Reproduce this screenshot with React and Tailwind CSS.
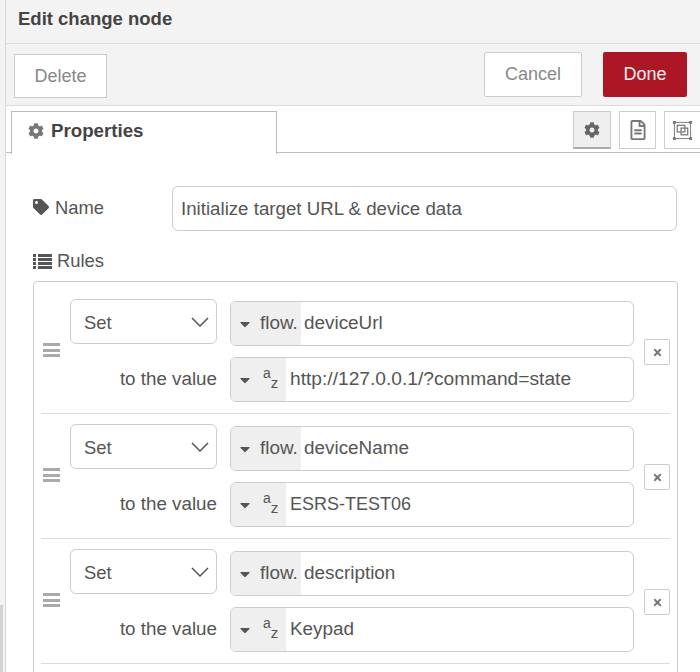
import React from 'react';
import { FaCog, FaTag, FaTimes, FaRegFileAlt, FaCaretDown } from 'react-icons/fa';

const LayoutIcon = () => (
  <svg viewBox="0 0 22 22" className="w-[21px] h-[21px] text-[#777]" fill="none" stroke="currentColor">
    <rect x="2.5" y="2.5" width="17" height="17" strokeWidth="1" />
    <rect x="1" y="1" width="3" height="3" fill="currentColor" stroke="none" />
    <rect x="18" y="1" width="3" height="3" fill="currentColor" stroke="none" />
    <rect x="1" y="18" width="3" height="3" fill="currentColor" stroke="none" />
    <rect x="18" y="18" width="3" height="3" fill="currentColor" stroke="none" />
    <rect x="5.5" y="5.5" width="8" height="7" strokeWidth="1.3" />
    <rect x="9.5" y="8.5" width="7" height="7" strokeWidth="1.3" />
  </svg>
);

const ListIcon = () => (
  <svg viewBox="0 0 19 15" className="w-[19px] h-[15px] text-[#555] mr-[5px]" fill="currentColor">
    <rect x="0" y="0" width="3" height="3" />
    <rect x="5" y="0" width="14" height="3" />
    <rect x="0" y="4" width="3" height="3" />
    <rect x="5" y="4" width="14" height="3" />
    <rect x="0" y="8" width="3" height="3" />
    <rect x="5" y="8" width="14" height="3" />
    <rect x="0" y="12" width="3" height="3" />
    <rect x="5" y="12" width="14" height="3" />
  </svg>
);

const Chevron = () => (
  <svg viewBox="0 0 18 10" className="w-[18px] h-[10px] text-[#555]" fill="none" stroke="currentColor" strokeWidth="1.5">
    <polyline points="1,1 9,9 17,1" />
  </svg>
);

const TypedPrefix = ({ type }) => (
  <div className={`${type === 'flow' ? 'w-[70px]' : 'w-[55px]'} h-full bg-[#efefef] flex items-center pl-[6px] shrink-0 text-[#555]`}>
    <FaCaretDown className="w-[16px] h-[16px] shrink-0 text-[#555]" />
    {type === 'flow' ? (
      <span className="ml-[7px] text-[18.9px]">flow.</span>
    ) : (
      <span className="ml-[10px] flex items-start text-[14px] leading-none">
        <span className="-mt-[3px]">a</span>
        <span className="mt-[6px] text-[15px]">z</span>
      </span>
    )}
  </div>
);

const TypedInput = ({ type, value, textSize, className }) => (
  <div className={`h-[45px] w-[404px] border border-[#ccc] rounded-[6px] overflow-hidden flex items-center bg-white ${className}`}>
    <TypedPrefix type={type} />
    <span className={`${type === 'flow' ? 'pl-[3px]' : 'pl-[4px]'} ${textSize} text-[#555]`}>{value}</span>
  </div>
);

const RuleRow = ({ field, value, valueSize }) => (
  <div className="h-[125px] border-b border-[#ddd] flex items-start shrink-0">
    <div className="w-[29px] shrink-0 flex flex-col gap-[2.5px] items-start pl-[2px] mt-[54px]">
      <div className="w-[17px] h-[3px] bg-[#aaa]" />
      <div className="w-[17px] h-[3px] bg-[#aaa]" />
      <div className="w-[17px] h-[3px] bg-[#aaa]" />
    </div>
    <div className="flex flex-col pt-[10px]">
      <div className="flex items-start">
        <div className="w-[147px] h-[45px] border border-[#ccc] rounded-[6px] bg-white flex items-center justify-between pl-[13px] pr-[7px] text-[18.4px] text-[#555]">
          <span className="pt-[3px]">Set</span>
          <Chevron />
        </div>
        <TypedInput type="flow" value={field} textSize="text-[18.9px]" className="ml-[13px] mt-[2px]" />
      </div>
      <div className="flex items-center mt-[11px]">
        <div className="w-[147px] text-right text-[18.8px] text-[#555]">to the value</div>
        <TypedInput type="str" value={value} textSize={valueSize} className="ml-[13px]" />
      </div>
    </div>
    <div className="ml-[10px] mt-[50px] w-[27px] h-[26px] border border-[#ccc] rounded-[2px] bg-white flex items-center justify-center">
      <FaTimes className="w-[11px] h-[11px] text-[#777]" />
    </div>
  </div>
);

export default function App() {
  return (
    <div className="w-[700px] h-[672px] overflow-hidden flex bg-white font-['Liberation_Sans',sans-serif]">
      {/* strip of the page behind the tray */}
      <div className="w-[6px] shrink-0 border-r border-[#d8d8d8] bg-[#f3f3f3] flex flex-col justify-end">
        <div className="w-[3px] h-[67px] bg-[#d4d4d4]" />
      </div>

      <div className="flex-1 min-w-0 flex flex-col">
        <div className="h-[44px] shrink-0 bg-[#f3f3f3] border-b border-[#ddd] flex items-center pl-[12px] pb-[5px] text-[18.5px] font-bold text-[#444]">
          Edit change node
        </div>

        <div className="h-[62px] shrink-0 bg-[#f3f3f3] border-b border-[#ddd] flex items-start pl-[8px] pr-[13px]">
          <button className="mt-[10px] w-[93px] h-[44px] border border-[#ccc] bg-white text-[18px] text-[#888]">Delete</button>
          <button className="ml-auto mt-[8px] w-[98px] h-[45px] border border-[#ccc] bg-white rounded-[2px] text-[18px] text-[#888]">Cancel</button>
          <button className="ml-[21px] mt-[8px] w-[84px] h-[45px] bg-[#ad1625] rounded-[2px] text-[18px] text-[#eee]">Done</button>
        </div>

        {/* tabs */}
        <div className="h-[47px] shrink-0 border-b border-[#bbb] flex items-start relative">
          <div className="ml-[5px] mt-[4px] w-[266px] h-[43px] border border-[#bbb] border-b-0 bg-white flex items-center pl-[16px] pb-[4px] text-[18.7px] font-bold text-[#444] relative top-[1px]">
            <FaCog className="w-[16px] h-[16px] text-[#777] mr-[7px]" />
            Properties
          </div>
          <div className="ml-auto mt-[5px] flex">
            <div className="w-[38px] h-[38px] border border-[#ccc] border-b-[2px] border-b-[#aaa] bg-[#efefef] flex items-center justify-center">
              <FaCog className="w-[16px] h-[16px] text-[#666]" />
            </div>
            <div className="ml-[8px] w-[37px] h-[38px] border border-[#ccc] bg-white flex items-center justify-center">
              <FaRegFileAlt className="w-[16px] h-[20px] text-[#777]" />
            </div>
            <div className="ml-[8px] w-[36px] h-[38px] border border-[#ccc] border-r-0 bg-white flex items-center justify-center">
              <LayoutIcon />
            </div>
          </div>
        </div>

        {/* form */}
        <div className="flex-1 min-h-0 pl-[27px] overflow-hidden">
          <div className="mt-[33px] flex items-center">
            <div className="w-[139px] flex items-center text-[18.4px] text-[#555] -mt-[2px]">
              <FaTag className="w-[16px] h-[16px] text-[#555] mr-[6px]" />
              Name
            </div>
            <div className="w-[505px] h-[45px] border border-[#ccc] rounded-[6px] flex items-center pl-[8px] pt-[1px] text-[18.7px] text-[#555]">
              Initialize target URL &amp; device data
            </div>
          </div>

          <div className="mt-[18px] flex items-center h-[24px] text-[18.4px] text-[#555]">
            <ListIcon />
            Rules
          </div>

          <div className="mt-[8px] w-[645px] h-[460px] border border-[#ccc] rounded-[4px] px-[7px] pt-[7px] flex flex-col">
            <RuleRow field="deviceUrl" value="http://127.0.0.1/?command=state" valueSize="text-[19.2px]" />
            <RuleRow field="deviceName" value="ESRS-TEST06" valueSize="text-[18px]" />
            <RuleRow field="description" value="Keypad" valueSize="text-[18.9px]" />
          </div>
        </div>
      </div>
    </div>
  );
}
